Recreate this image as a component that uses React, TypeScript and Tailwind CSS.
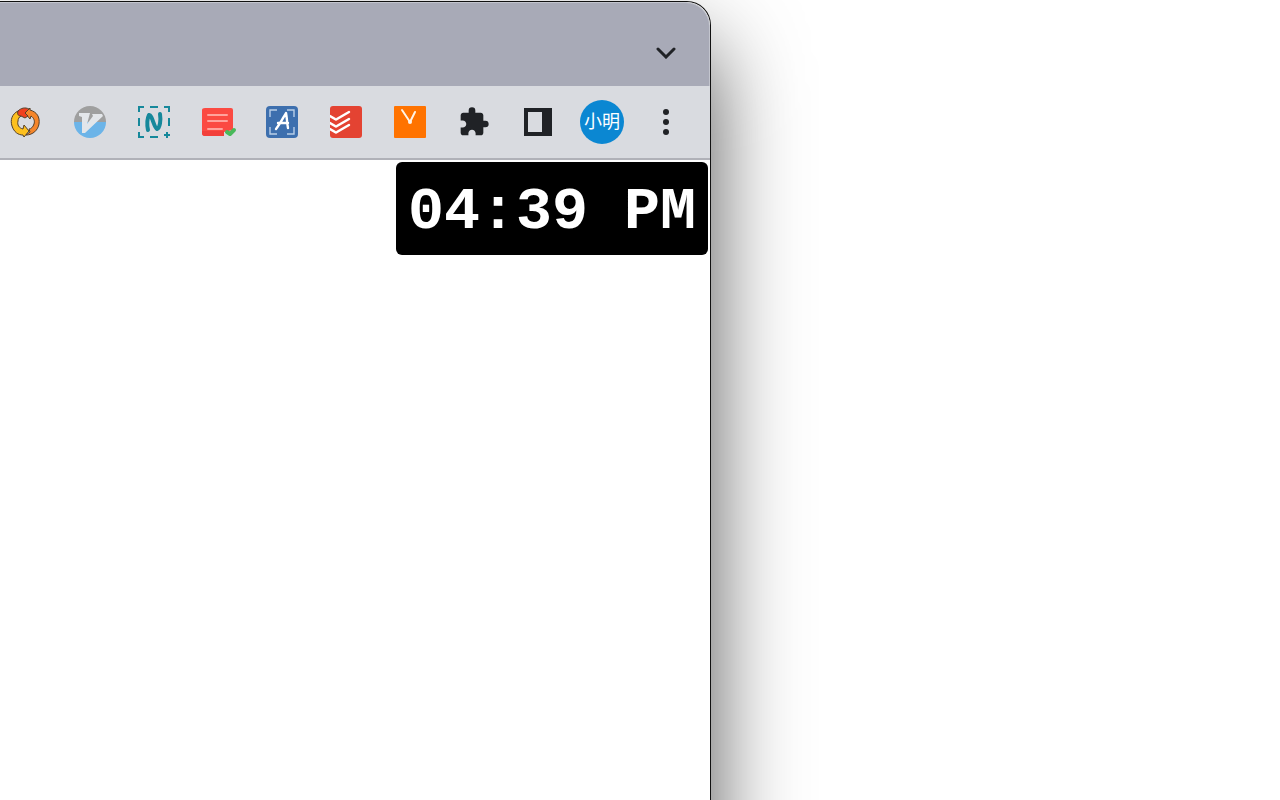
import React from 'react';

const SyncIcon = () => (
  <svg viewBox="0 0 32 32" className="size-8">
    <g stroke="#54402a" strokeWidth="1" strokeLinejoin="round">
      <path
        d="M8 5C2 8 0 14 2 20c2 6 6 9 11 9l1 2 5-6-5-6-1 4c-4-1-6-4-5-8 0-2 1-4 3-5Z"
        fill="#fdc01f"
      />
      <path
        d="M20 2l-5 5 5 6 1-3c3 2 4 5 3 8-1 3-3 5-5 5l1 3-4 3c7 0 12-5 13-11 1-7-2-12-9-14Z"
        fill="#f5862b"
      />
      <path d="M8 5c3-3 7-4 11-2l-4 4 3 3-3 2-4-2C8 10 7 8 8 5Z" fill="#f0401f" />
    </g>
  </svg>
);

const VimIcon = () => (
  <svg viewBox="0 0 32 32" className="size-8">
    <path d="M0 16a16 16 0 0 1 32 0Z" fill="#9f9f9f" />
    <path d="M0 16a16 16 0 0 0 32 0Z" fill="#6cb4e8" />
    <path d="M5 7h11l-3 11 6-8-1-2h10l1 2L11 27H8V11L5 10Z" fill="#e3e6ea" />
  </svg>
);

const NimbusIcon = () => (
  <svg viewBox="0 0 32 32" className="size-8 overflow-visible" fill="none" stroke="#16889b">
    <path
      d="M1 6V1h5M12 1h8M26 1h5v5M31 12v8M1 12v8M1 26v5h5M12 31h8"
      strokeWidth="2"
    />
    <path
      d="M10 24C9 19 9 13 11 9c3-1 5 13 8 14 3-1 4-9 3-15"
      strokeWidth="4"
      strokeLinecap="round"
      strokeLinejoin="round"
    />
    <path d="M29 26v6M26 29h6" strokeWidth="2" />
  </svg>
);

const NotesIcon = () => (
  <svg viewBox="0 0 32 32" className="size-8 overflow-visible">
    <path d="M3 2h26q2 0 2 2v20l-9 2v4H3q-3 0-3-3V4q0-2 3-2Z" fill="#fb4a42" />
    <path d="M0 25h22v5H3q-3 0-3-3Z" fill="#f23f3a" />
    <path
      d="M6 9h19M6 15h19M6 23h14"
      stroke="#ffa39c"
      strokeWidth="2"
      strokeLinecap="round"
    />
    <path
      d="M25 26l3 2 4-4"
      fill="none"
      stroke="#49b95b"
      strokeWidth="4"
      strokeLinecap="round"
      strokeLinejoin="round"
    />
  </svg>
);

const CaptureIcon = () => (
  <svg viewBox="0 0 32 32" className="size-8" fill="none" stroke="#fff">
    <rect width="32" height="32" rx="4" fill="#3d6fae" stroke="none" />
    <path d="M4 11V4h7M21 4h7v7M28 21v7h-7M11 28H4v-7" stroke="#b9cfe8" strokeWidth="1.4" />
    <path
      d="M10 23C14 18 17 12 20 7c1 5 1 10 2 15M12 17h10"
      strokeWidth="2.4"
      strokeLinecap="round"
      strokeLinejoin="round"
    />
  </svg>
);

const TodoistIcon = () => (
  <svg viewBox="0 0 32 32" className="size-8">
    <rect width="32" height="32" rx="3" fill="#e44332" />
    <path
      d="M0 10l5 3q1 1 2 0l12-7M0 17l5 3q1 1 2 0l12-7M0 23l5 3q1 1 2 0l12-7"
      fill="none"
      stroke="#fff"
      strokeWidth="2.4"
      strokeLinecap="round"
    />
  </svg>
);

const ClockIcon = () => (
  <svg viewBox="0 0 32 32" className="size-8">
    <rect width="32" height="32" rx="1" fill="#ff7300" />
    <path
      d="M8 4l8 12 5-10"
      fill="none"
      stroke="#fff3e6"
      strokeWidth="2"
      strokeLinecap="round"
      strokeLinejoin="round"
    />
    <circle cx="16" cy="16" r="2" fill="#fff3e6" />
  </svg>
);

const PuzzleIcon = () => (
  <svg viewBox="0 0 24 24" className="size-8" fill="#202226">
    <path d="M20.5 11H19V7c0-1.1-.9-2-2-2h-4V3.5a2.5 2.5 0 0 0-5 0V5H4c-1.1 0-2 .9-2 2v3.8h1.5c1.5 0 2.7 1.2 2.7 2.7S5 16.200 3.500 16.200H2V20c0 1.100.9 2 2 2h3.800v-1.500c0-1.500 1.200-2.700 2.700-2.700s2.700 1.200 2.700 2.700V22H17c1.100 0 2-.9 2-2v-4h1.500a2.500 2.500 0 0 0 0-5Z" />
  </svg>
);

const SidePanelIcon = () => (
  <svg viewBox="0 0 28 28" className="size-7">
    <path d="M0 0h28v28H0ZM4 4v20h14V4Z" fill="#202226" fillRule="evenodd" />
  </svg>
);

const MenuIcon = () => (
  <svg viewBox="0 0 32 32" className="size-8" fill="#202226">
    <circle cx="16" cy="6" r="3" />
    <circle cx="16" cy="16" r="3" />
    <circle cx="16" cy="26" r="3" />
  </svg>
);

const Avatar = () => (
  <span className="flex size-11 items-center justify-center rounded-full bg-[#0b87d2] text-lg text-white">
    小明
  </span>
);

const actions = [
  { name: 'Sync', icon: <SyncIcon /> },
  { name: 'Vim keys', icon: <VimIcon /> },
  { name: 'Screenshot', icon: <NimbusIcon /> },
  { name: 'Notes', icon: <NotesIcon /> },
  { name: 'Text capture', icon: <CaptureIcon /> },
  { name: 'Tasks', icon: <TodoistIcon /> },
  { name: 'Clock', icon: <ClockIcon /> },
  { name: 'Extensions', icon: <PuzzleIcon /> },
  { name: 'Side panel', icon: <SidePanelIcon /> },
  { name: 'Profile', icon: <Avatar /> },
  { name: 'Menu', icon: <MenuIcon /> },
];

const TabStrip = () => (
  <div className="flex h-21 items-center justify-end rounded-tr-3xl border-t border-r border-[#c3c5ce] bg-[#a8aab7] pt-4 pr-[27px]">
    <button aria-label="Search tabs" className="flex size-8 items-center justify-center">
      <svg viewBox="0 0 20 12" className="h-3 w-5" fill="none">
        <path
          d="M2 2l8 8 8-8"
          stroke="#202226"
          strokeWidth="3"
          strokeLinecap="round"
        />
      </svg>
    </button>
  </div>
);

const Toolbar = () => (
  <div className="flex h-[74px] items-center justify-end border-b-2 border-[#b0b1b8] bg-[#d9dbe0] pr-3">
    {actions.map((action) => (
      <button
        key={action.name}
        aria-label={action.name}
        className="flex w-16 shrink-0 items-center justify-center"
      >
        {action.icon}
      </button>
    ))}
  </div>
);

const App = () => {
  return (
    <div className="h-screen overflow-hidden bg-white pt-px font-['Liberation_Sans','Noto_Sans_CJK_SC',sans-serif]">
      <div className="h-[130vh] w-5/9 rounded-tr-3xl border-t border-r border-[#111] bg-white shadow-[0_45px_90px_rgba(0,0,0,0.68)]">
        <div className="overflow-hidden rounded-tr-3xl">
          <TabStrip />
          <Toolbar />
        </div>
        <div className="flex justify-end p-0.5">
          <time
            dateTime="16:39"
            className="rounded-md bg-black px-3 pt-5 pb-3 font-['Liberation_Mono',monospace] text-6xl leading-[61px] font-bold text-white"
          >
            04:39 PM
          </time>
        </div>
      </div>
    </div>
  );
};

export default App;
